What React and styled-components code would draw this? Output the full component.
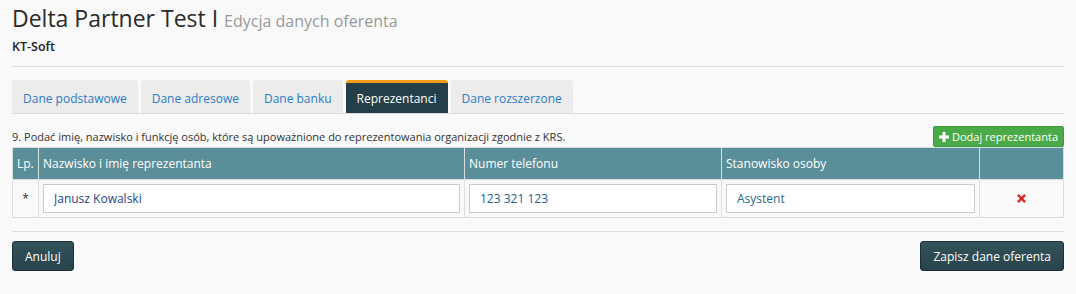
import React, { useState } from 'react'
import styled, { createGlobalStyle } from 'styled-components'

const GlobalStyle = createGlobalStyle`
  body {
    margin: 0;
    background: #f9f9f9;
    font-family: "Open Sans", "DejaVu Sans", sans-serif;
    color: #333;
  }
`

const Page = styled.div`
  padding: 0 12px;
`

const Header = styled.div`
  padding-top: 3px;
  padding-bottom: 10px;
  border-bottom: 1px solid #dcdcdc;
`

const Title = styled.h1`
  margin: 0;
  font-size: 23px;
  font-weight: 400;
  line-height: 30px;
  color: #2b2b2b;
  small {
    font-size: 16px;
    color: #999;
  }
`

const Company = styled.div`
  font-size: 12.5px;
  font-weight: 600;
  line-height: 18px;
  margin-top: 2px;
  color: #222;
`

const TabBar = styled.div`
  display: flex;
  gap: 3px;
  margin-top: 13px;
  border-bottom: 1px solid #dcdcdc;
`

const Tab = styled.button`
  border: 0;
  border-top: 3px solid ${p => (p.$active ? '#f39c12' : 'transparent')};
  border-radius: 3px 3px 0 0;
  background: ${p => (p.$active ? '#243f48' : '#ececec')};
  color: ${p => (p.$active ? '#fff' : '#2a7cc7')};
  font-family: inherit;
  font-size: 12px;
  height: 33px;
  padding: 0 11px;
  cursor: pointer;
`

const InfoRow = styled.div`
  display: flex;
  justify-content: space-between;
  align-items: flex-end;
  margin-top: 12px;
`

const Info = styled.span`
  font-size: 11px;
  color: #333;
  padding-bottom: 3px;
`

const AddButton = styled.button`
  display: flex;
  align-items: center;
  gap: 3px;
  height: 21px;
  padding: 0 5px;
  border: 1px solid #3d9a3d;
  border-radius: 2px;
  background: #4aaa47;
  color: #fff;
  font-family: inherit;
  font-size: 11px;
`

const Table = styled.table`
  width: 100%;
  border-collapse: collapse;
  table-layout: fixed;
  font-size: 12px;
`

const Th = styled.th`
  box-sizing: border-box;
  background: #5a8e99;
  color: #fff;
  font-weight: 400;
  text-align: left;
  height: 32px;
  padding: 0 4px;
  border: 1px solid #d6dfe1;
  width: ${p => p.$w || 'auto'};
`

const Td = styled.td`
  border: 1px solid #ddd;
  padding: 4px;
  text-align: ${p => (p.$center ? 'center' : 'left')};
`

const Input = styled.input`
  display: block;
  box-sizing: border-box;
  width: 100%;
  height: 29px;
  border: 1px solid #ccc;
  background: #fff;
  padding: 0 10px;
  font-family: inherit;
  font-size: 12px;
  color: ${p => p.$color || '#1f5e8c'};
  outline: none;
`

const Footer = styled.div`
  display: flex;
  justify-content: space-between;
  margin-top: 13px;
  padding-top: 9px;
  border-top: 1px solid #dcdcdc;
`

const DarkButton = styled.button`
  height: 30px;
  padding: 0 12px;
  border: 1px solid #1c3036;
  border-radius: 3px;
  background: linear-gradient(#33525a, #28444c);
  color: #fff;
  font-family: inherit;
  font-size: 12px;
`

const tabs = ['Dane podstawowe', 'Dane adresowe', 'Dane banku', 'Reprezentanci', 'Dane rozszerzone']

const App = () => {
  const [active, setActive] = useState(3)
  const [rows, setRows] = useState([
    { name: 'Janusz Kowalski', phone: '123 321 123', role: 'Asystent' },
  ])

  const update = (i, key, value) => {
    setRows(rows.map((r, idx) => (idx === i ? { ...r, [key]: value } : r)))
  }

  return (
    <>
      <GlobalStyle />
      <Page>
        <Header>
          <Title>Delta Partner Test I <small>Edycja danych oferenta</small></Title>
          <Company>KT-Soft</Company>
        </Header>

        <TabBar>
          {tabs.map((t, i) => (
            <Tab key={t} $active={i === active} onClick={() => setActive(i)}>{t}</Tab>
          ))}
        </TabBar>

        <InfoRow>
          <Info>9. Podać imię, nazwisko i funkcję osób, które są upoważnione do reprezentowania organizacji zgodnie z KRS.</Info>
          <AddButton onClick={() => setRows([...rows, { name: '', phone: '', role: '' }])}>
            <svg width="10" height="10" viewBox="0 0 10 10">
              <path d="M3.5 0h3v3.5H10v3H6.5V10h-3V6.5H0v-3h3.5z" fill="#fff" />
            </svg>
            Dodaj reprezentanta
          </AddButton>
        </InfoRow>

        <Table>
          <thead>
            <tr>
              <Th $w="26px">Lp.</Th>
              <Th $w="426px">Nazwisko i imię reprezentanta</Th>
              <Th $w="257px">Numer telefonu</Th>
              <Th $w="258px">Stanowisko osoby</Th>
              <Th></Th>
            </tr>
          </thead>
          <tbody>
            {rows.map((r, i) => (
              <tr key={i}>
                <Td $center>*</Td>
                <Td><Input $color="#27478a" value={r.name} onChange={e => update(i, 'name', e.target.value)} /></Td>
                <Td><Input value={r.phone} onChange={e => update(i, 'phone', e.target.value)} /></Td>
                <Td><Input $color="#2a6a8a" value={r.role} onChange={e => update(i, 'role', e.target.value)} /></Td>
                <Td $center>
                  <svg width="9" height="9" viewBox="0 0 10 10" style={{ cursor: 'pointer' }} onClick={() => setRows(rows.filter((_, idx) => idx !== i))}>
                    <path d="M1 1l8 8M9 1l-8 8" stroke="#d9262b" strokeWidth="2.6" />
                  </svg>
                </Td>
              </tr>
            ))}
          </tbody>
        </Table>

        <Footer>
          <DarkButton>Anuluj</DarkButton>
          <DarkButton>Zapisz dane oferenta</DarkButton>
        </Footer>
      </Page>
    </>
  )
}

export default App
